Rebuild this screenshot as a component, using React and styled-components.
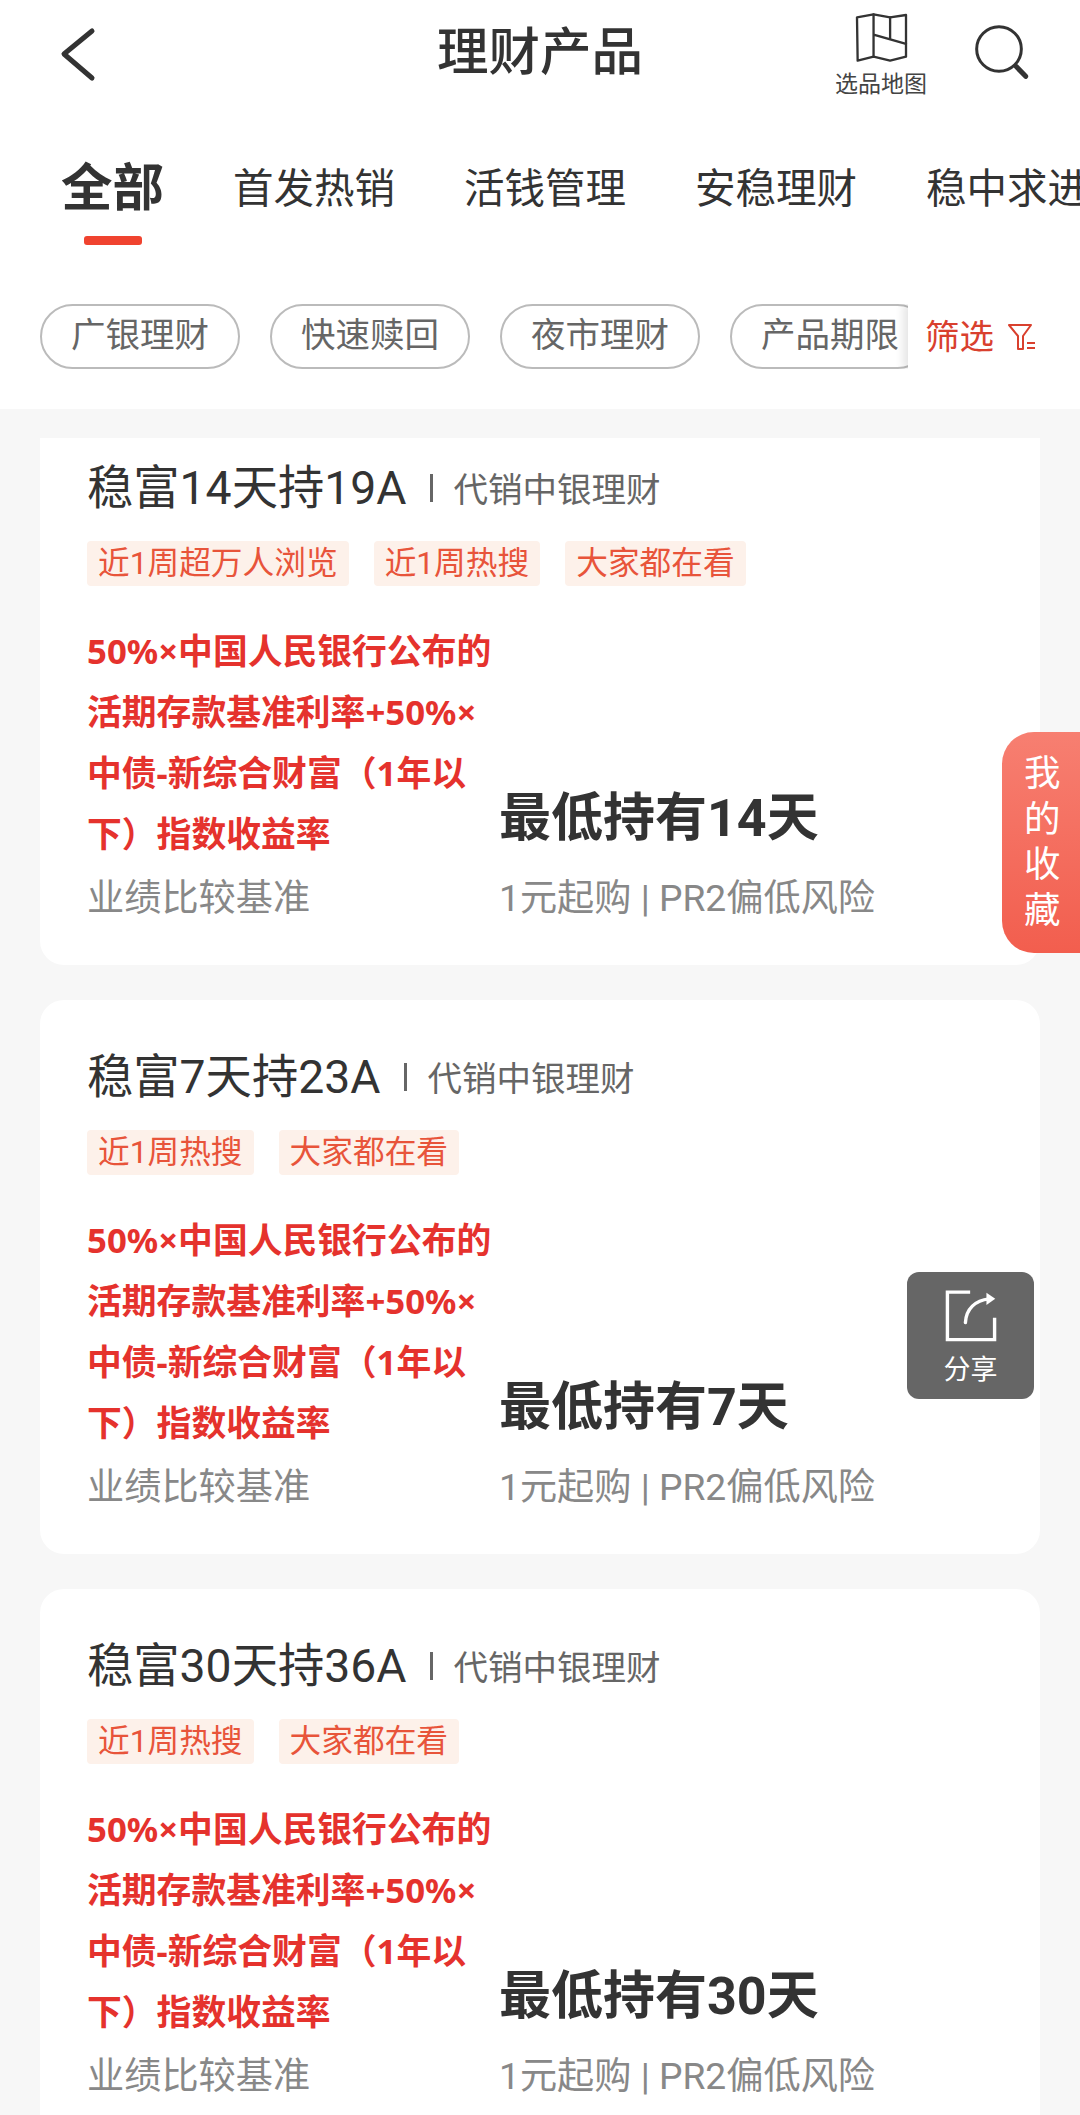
import React from "react";
import styled, { createGlobalStyle } from "styled-components";

const Global = createGlobalStyle`
  html, body { margin: 0; padding: 0; background: #f7f7f7; }
  body { font-family: Roboto, "Noto Sans CJK SC", "Noto Sans", sans-serif; }
  * { box-sizing: border-box; }
`;

const Page = styled.div`
  position: relative;
  width: 1080px;
  height: 2115px;
  overflow: hidden;
  background: #f7f7f7;
`;
const Header = styled.header`
  background: #fff;
  height: 409px;
`;
const Nav = styled.div`
  display: grid;
  grid-template-columns: 1fr auto 1fr;
  align-items: start;
  height: 110px;
  padding: 0 46px;
`;
const BackIcon = styled.svg`
  display: block;
  width: 44px;
  height: 60px;
  margin: 24px 0 0 10px;
`;
const Title = styled.h1`
  margin: 23px 0 0;
  font-size: 51.5px;
  line-height: 60px;
  font-weight: 500;
  color: #333;
`;
const NavActions = styled.div`
  display: flex;
  justify-content: flex-end;
  align-items: flex-start;
  gap: 47px;
`;
const MapAction = styled.div`
  display: flex;
  flex-direction: column;
  align-items: center;
  padding-top: 12px;
`;
const MapIcon = styled.svg`
  display: block;
  width: 55px;
  height: 51px;
`;
const MapLabel = styled.span`
  font-size: 23px;
  line-height: 28px;
  margin-top: 8px;
  color: #444;
`;
const SearchIcon = styled.svg`
  display: block;
  width: 60px;
  height: 60px;
  margin-top: 24px;
`;
const Tabs = styled.nav`
  display: flex;
  align-items: flex-start;
  gap: 69px;
  margin-top: 49px;
  padding-left: 61px;
  overflow: hidden;
`;
const Tab = styled.div`
  flex-shrink: 0;
  display: flex;
  flex-direction: column;
  align-items: center;
  font-size: ${(p) => (p.$active ? 51.5 : 40.5)}px;
  font-weight: ${(p) => (p.$active ? 700 : 400)};
  line-height: 60px;
  color: #333;
`;
const Indicator = styled.i`
  display: block;
  width: 58px;
  height: 9px;
  margin-top: 17px;
  border-radius: 3px;
  background: #f0432f;
`;
const ChipRow = styled.div`
  position: relative;
  display: flex;
  gap: 30px;
  margin-top: 59px;
  padding-left: 40px;
  overflow: hidden;
`;
const Chip = styled.div`
  flex-shrink: 0;
  width: 200px;
  height: 65px;
  border: 2px solid #bbb;
  border-radius: 33px;
  text-align: center;
  font-size: 34.5px;
  line-height: 59px;
  color: #666;
`;
const FilterBox = styled.div`
  position: absolute;
  top: 0;
  right: 0;
  bottom: 0;
  width: 172px;
  padding: 0 0 6px 17px;
  display: flex;
  align-items: center;
  gap: 14px;
  background: #fff;
  box-shadow: -5px 0 8px rgba(0, 0, 0, 0.1);
  color: #d9402e;
  font-size: 34.5px;
`;
const FilterIcon = styled.svg`
  display: block;
  width: 28px;
  height: 28px;
  margin-top: 6px;
`;
const Clip = styled.main`
  margin-top: 29px;
  height: 1677px;
  overflow: hidden;
`;
const List = styled.div`
  display: flex;
  flex-direction: column;
  gap: 35px;
  margin: -27px 40px 0;
`;
const Card = styled.section`
  flex-shrink: 0;
  height: 554px;
  padding: 47px 47px 0;
  border-radius: 24px;
  background: #fff;
`;
const NameRow = styled.div`
  display: flex;
  align-items: center;
  height: 60px;
`;
const Name = styled.span`
  font-size: 46.3px;
  line-height: 60px;
  color: #333;
`;
const Divider = styled.i`
  display: block;
  width: 3px;
  height: 28px;
  margin: 0 20px 0 24px;
  background: #666;
`;
const Seller = styled.span`
  padding-bottom: 3px;
  font-size: 34.5px;
  color: #666;
`;
const TagRow = styled.div`
  display: flex;
  gap: 25px;
  margin-top: 23px;
`;
const Tag = styled.span`
  height: 45px;
  padding: 0 11px;
  border-radius: 4px;
  background: #fdf1ea;
  color: #e8543a;
  font-size: 31.7px;
  line-height: 46px;
`;
const Body = styled.div`
  display: flex;
  align-items: flex-end;
  margin-top: 34px;
`;
const LeftCol = styled.div`
  width: 412px;
`;
const Rate = styled.div`
  font-family: "Noto Sans", "Noto Sans CJK SC", sans-serif;
  font-size: 34.8px;
  font-weight: 700;
  line-height: 61px;
  color: #e5322d;
  white-space: nowrap;
`;
const Caption = styled.div`
  margin-top: ${(p) => p.$top}px;
  font-size: 37.2px;
  line-height: 60px;
  color: #888;
  white-space: nowrap;
`;
const Hold = styled.div`
  font-size: 52px;
  font-weight: 700;
  line-height: 76px;
  margin-bottom: 11px;
  color: #333;
  white-space: nowrap;
`;
const FavTab = styled.div`
  position: absolute;
  top: 732px;
  right: 0;
  width: 78px;
  height: 221px;
  padding: 0 0 1px 22px;
  display: flex;
  flex-direction: column;
  justify-content: center;
  border-radius: 32px 0 0 32px;
  background: linear-gradient(180deg, #f77f71, #f25e4e);
  color: #fff;
  font-size: 36.5px;
  line-height: 45.5px;
`;
const ShareBtn = styled.div`
  position: absolute;
  top: 1272px;
  left: 907px;
  width: 127px;
  height: 127px;
  padding-top: 16px;
  display: flex;
  flex-direction: column;
  align-items: center;
  border-radius: 12px;
  background: #666;
  color: #fff;
  font-size: 27px;
  line-height: 40px;
`;
const ShareIcon = styled.svg`
  display: block;
  width: 56px;
  height: 56px;
  margin-bottom: 6px;
`;

const products = [
  { name: "稳富14天持19A", hold: "最低持有14天", tags: ["近1周超万人浏览", "近1周热搜", "大家都在看"] },
  { name: "稳富7天持23A", hold: "最低持有7天", tags: ["近1周热搜", "大家都在看"] },
  { name: "稳富30天持36A", hold: "最低持有30天", tags: ["近1周热搜", "大家都在看"] },
];
const rateLines = ["50%×中国人民银行公布的", "活期存款基准利率+50%×", "中债-新综合财富（1年以", "下）指数收益率"];

export default function App() {
  return (
    <Page>
      <Global />
      <Header>
        <Nav>
          <BackIcon viewBox="0 0 44 60" fill="none" stroke="#333" strokeWidth="5" strokeLinecap="round" strokeLinejoin="round">
            <path d="M36 7 L8 30 L36 54" />
          </BackIcon>
          <Title>理财产品</Title>
          <NavActions>
            <MapAction>
              <MapIcon viewBox="222 30 164 154" fill="none" stroke="#333" strokeWidth="7" strokeLinejoin="round" strokeLinecap="round">
                <path d="M230 46 L280 37 L330 46 L378 39 L378 165 L330 177 L280 165 L232 177 Z" />
                <path d="M280 37 V165 M280 98 L378 126 M330 46 V110" />
              </MapIcon>
              <MapLabel>选品地图</MapLabel>
            </MapAction>
            <SearchIcon viewBox="585 65 180 180" fill="none" stroke="#333" strokeLinecap="round">
              <circle cx="660" cy="140" r="67" strokeWidth="9" />
              <path d="M711 192 L740 222" strokeWidth="15" />
            </SearchIcon>
          </NavActions>
        </Nav>
        <Tabs>
          <Tab $active>
            全部
            <Indicator />
          </Tab>
          <Tab>首发热销</Tab>
          <Tab>活钱管理</Tab>
          <Tab>安稳理财</Tab>
          <Tab>稳中求进</Tab>
        </Tabs>
        <ChipRow>
          <Chip>广银理财</Chip>
          <Chip>快速赎回</Chip>
          <Chip>夜市理财</Chip>
          <Chip>产品期限</Chip>
          <FilterBox>
            筛选
            <FilterIcon viewBox="0 0 28 28" fill="none" stroke="#d9402e" strokeWidth="2" strokeLinejoin="round">
              <path d="M1 2 H23 L15 13 V26 H10 V13 Z" />
              <path d="M19 20 H27 M19 25 H27" />
            </FilterIcon>
          </FilterBox>
        </ChipRow>
      </Header>
      <Clip>
        <List>
          {products.map((p) => (
            <Card key={p.name}>
              <NameRow>
                <Name>{p.name}</Name>
                <Divider />
                <Seller>代销中银理财</Seller>
              </NameRow>
              <TagRow>
                {p.tags.map((t) => (
                  <Tag key={t}>{t}</Tag>
                ))}
              </TagRow>
              <Body>
                <LeftCol>
                  {rateLines.map((l) => (
                    <Rate key={l}>{l}</Rate>
                  ))}
                  <Caption $top={4}>业绩比较基准</Caption>
                </LeftCol>
                <div>
                  <Hold>{p.hold}</Hold>
                  <Caption $top={1}>1元起购 | PR2偏低风险</Caption>
                </div>
              </Body>
            </Card>
          ))}
        </List>
      </Clip>
      <FavTab>
        <span>我</span>
        <span>的</span>
        <span>收</span>
        <span>藏</span>
      </FavTab>
      <ShareBtn>
        <ShareIcon viewBox="190 110 165 165" fill="none" stroke="#fff" strokeWidth="10">
          <path d="M270 122 H203 V262 H342 V198" />
          <path d="M256 212 C258 172 285 146 326 142" strokeLinecap="round" />
          <path d="M318 124 L344 142 L318 160 Z" fill="#fff" stroke="none" />
        </ShareIcon>
        分享
      </ShareBtn>
    </Page>
  );
}
